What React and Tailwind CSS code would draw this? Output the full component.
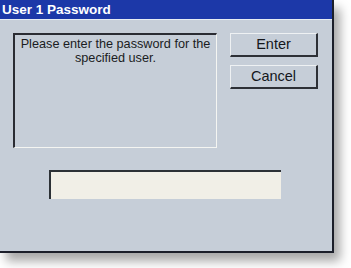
export default function App() {
  return (
    <div className="w-[351px] h-[268px] bg-white overflow-hidden" style={{ fontFamily: '"Liberation Sans", Arial, sans-serif' }}>
      <div className="w-[334px] h-[253px] flex flex-col bg-[#c6ced8] border-r-2 border-b-2 border-[#1c1f2a] shadow-[6px_8px_10px_rgba(0,0,0,0.35)]">
        <div className="h-[20px] bg-[#1c38a8] flex items-center pl-[2px] border-b border-[#e6ecf2]">
          <span className="text-white font-bold text-[13.5px] leading-none whitespace-nowrap">User 1 Password</span>
        </div>
        <div className="flex-1 flex flex-col">
          <div className="flex pt-[13px] pl-[13px] gap-[13px]">
            <div className="w-[204px] h-[115px] border-t-2 border-l-2 border-t-[#2a2c33] border-l-[#2a2c33] border-b border-r border-b-[#f4f5f2] border-r-[#f4f5f2] text-center text-[12.7px] leading-[14px] text-[#1a1c22] pt-[2px] whitespace-nowrap">
              Please enter the password for the<br />specified user.
            </div>
            <div className="flex flex-col gap-[8px]">
              <div className="w-[88px] h-[24px] border-t border-l border-[#eef1f3] border-b-2 border-r-2 border-b-[#2d3036] border-r-[#2d3036] flex items-center justify-center text-[14.5px] text-[#15171c]">Enter</div>
              <div className="w-[88px] h-[24px] border-t border-l border-[#eef1f3] border-b-2 border-r-2 border-b-[#2d3036] border-r-[#2d3036] flex items-center justify-center text-[14.5px] text-[#15171c]">Cancel</div>
            </div>
          </div>
          <div className="pl-[49px] pt-[22px]">
            <div className="w-[232px] h-[29px] bg-[#f1efe7] border-t-2 border-l-2 border-[#2c3136]"></div>
          </div>
        </div>
      </div>
    </div>
  );
}
